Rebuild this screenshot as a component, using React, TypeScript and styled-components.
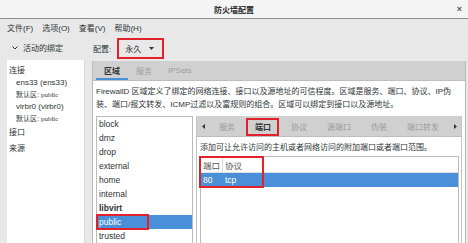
import styled, { createGlobalStyle } from "styled-components"

const FONT = `"Liberation Sans", "Noto Sans CJK SC", sans-serif`

const GlobalStyle = createGlobalStyle`
  html, body {
    margin: 0;
    padding: 0;
    background: #e8e8e8;
    overflow: hidden;
  }
  body {
    font-family: ${FONT};
    font-size: 8px;
    color: #2e3436;
  }
`

const Window = styled.div`
  width: 468px;
  height: 243px;
  display: flex;
  flex-direction: column;
  overflow: hidden;
  background: #e8e8e8;
`

const TitleBar = styled.div`
  height: 18px;
  flex-shrink: 0;
  display: grid;
  grid-template-columns: 1fr auto 1fr;
  align-items: center;
  background: #f4f4f4;
  border-bottom: 1px solid #8e8e8e;
`

const Title = styled.div`
  grid-column: 2;
  font-size: 8px;
  font-weight: bold;
  color: #2e2e2e;
`

const CloseButton = styled.div`
  justify-self: end;
  margin-right: 6px;
  font-size: 9px;
  font-weight: bold;
  color: #555;
  line-height: 1;
`

const MenuBar = styled.div`
  height: 16px;
  flex-shrink: 0;
  display: flex;
  align-items: center;
  padding-left: 7px;
  gap: 9px;
`

const MenuItem = styled.span`
  color: #2e3436;
  white-space: nowrap;
`

const Body = styled.div`
  flex: 1;
  display: flex;
  min-height: 0;
`

const Sidebar = styled.div`
  width: 88px;
  flex-shrink: 0;
  display: flex;
  flex-direction: column;
`

const SidebarHeader = styled.div`
  height: 25px;
  display: flex;
  align-items: center;
  gap: 5px;
  padding-left: 12px;
  white-space: nowrap;
`

const BindingPanel = styled.div`
  flex: 1;
  margin: 0 3px 0 7px;
  padding: 4px 0 0 2px;
  background: #ffffff;
  border-right: 1px solid #dadada;
`

const BindingGroup = styled.div<{ $tall?: boolean }>`
  line-height: ${(p) => (p.$tall ? "16px" : "13px")};
  font-size: 8px;
  white-space: nowrap;
`

const BindingName = styled.div`
  line-height: 12px;
  padding-left: 7px;
  white-space: nowrap;
`

const BindingZone = styled.div`
  line-height: 11px;
  padding-left: 7px;
  font-size: 7px;
  white-space: nowrap;

  span {
    font-family: "Liberation Serif", serif;
    font-size: 7px;
  }
`

const Main = styled.div`
  flex: 1;
  display: flex;
  flex-direction: column;
  margin-left: 4px;
  margin-right: 2px;
  min-width: 0;
`

const ConfigRow = styled.div`
  height: 26px;
  flex-shrink: 0;
  display: flex;
  align-items: center;
  padding-left: 1px;
  gap: 6px;
`

const Dropdown = styled.div`
  height: 21px;
  width: 47px;
  box-sizing: border-box;
  display: flex;
  align-items: center;
  justify-content: space-between;
  padding: 0 8px 0 6px;
  border: 2px solid #e3212b;
`

const Notebook = styled.div`
  flex: 1;
  display: flex;
  flex-direction: column;
  border-left: 1px solid #b9b9b9;
  border-right: 1px solid #b9b9b9;
  min-height: 0;
`

const TabBar = styled.div<{ $height: number }>`
  height: ${(p) => p.$height}px;
  flex-shrink: 0;
  display: flex;
  align-items: stretch;
  background: #d0d0d0;
  border-bottom: 1px solid #bdbdbd;
`

const OuterTab = styled.div<{ $active?: boolean }>`
  display: flex;
  align-items: center;
  padding: 0 8px;
  font-weight: ${(p) => (p.$active ? "bold" : "normal")};
  color: ${(p) => (p.$active ? "#2e3436" : "#9c9c9c")};
  box-shadow: ${(p) => (p.$active ? "inset 0 -2px 0 #4a90d9" : "none")};
  white-space: nowrap;
`

const TabFirst = styled.div`
  width: 3px;
`

const Page = styled.div`
  flex: 1;
  display: flex;
  flex-direction: column;
  background: #ffffff;
  padding: 4px 3px 0 3px;
  min-height: 0;
`

const Description = styled.p`
  margin: 0;
  line-height: 13px;
  white-space: nowrap;
`

const ZoneArea = styled.div`
  flex: 1;
  display: flex;
  gap: 3px;
  margin-top: 5px;
  min-height: 0;
`

const ZoneList = styled.div`
  width: 97px;
  flex-shrink: 0;
  box-sizing: border-box;
  border: 1px solid #bcbcbc;
  border-bottom: none;
`

const ZoneItem = styled.div<{ $selected?: boolean; $bold?: boolean }>`
  position: relative;
  height: 14px;
  line-height: 14px;
  padding-left: 2px;
  font-size: 8.5px;
  font-weight: ${(p) => (p.$bold ? "bold" : "normal")};
  background: ${(p) => (p.$selected ? "#4a90d9" : "transparent")};
  color: ${(p) => (p.$selected ? "#ffffff" : "#2e3436")};
`

const Highlight = styled.div<{ $w: number; $h: number; $l: number; $t: number }>`
  position: absolute;
  left: ${(p) => p.$l}px;
  top: ${(p) => p.$t}px;
  width: ${(p) => p.$w}px;
  height: ${(p) => p.$h}px;
  box-sizing: border-box;
  border: 2px solid #e3212b;
  pointer-events: none;
`

const InnerNotebook = styled.div`
  flex: 1;
  display: flex;
  flex-direction: column;
  border-left: 1px solid #c4c4c4;
  border-right: 1px solid #c4c4c4;
  min-width: 0;
`

const InnerTab = styled.div<{ $active?: boolean }>`
  position: relative;
  display: flex;
  align-items: center;
  padding: 0 10px;
  font-weight: ${(p) => (p.$active ? "bold" : "normal")};
  color: ${(p) => (p.$active ? "#2e3436" : "#9c9c9c")};
  white-space: nowrap;
`

const Arrow = styled.div<{ $right?: boolean }>`
  width: 12px;
  display: flex;
  align-items: center;
  justify-content: center;
  margin-left: ${(p) => (p.$right ? "auto" : "0")};
  color: #2e3436;
`

const InnerPage = styled.div`
  flex: 1;
  display: flex;
  flex-direction: column;
  background: #ffffff;
  padding: 5px 2px 0 3px;
  min-height: 0;
`

const Hint = styled.div`
  line-height: 12px;
  white-space: nowrap;
`

const PortTable = styled.div`
  position: relative;
  flex: 1;
  margin-top: 2px;
  border: 1px solid #bcbcbc;
  border-bottom: none;
`

const TableRow = styled.div<{ $selected?: boolean; $header?: boolean }>`
  display: flex;
  height: ${(p) => (p.$header ? 15 : 14)}px;
  align-items: center;
  background: ${(p) => (p.$selected ? "#4a90d9" : "#ffffff")};
  color: ${(p) => (p.$selected ? "#ffffff" : p.$header ? "#555" : "#2e3436")};
  border-bottom: ${(p) => (p.$header ? "1px solid #e0e0e0" : "none")};
  font-size: 8.5px;
`

const Cell = styled.div<{ $width?: number; $divider?: boolean }>`
  width: ${(p) => (p.$width ? `${p.$width}px` : "auto")};
  padding-left: 2px;
  height: 100%;
  display: flex;
  align-items: center;
  box-sizing: border-box;
  border-right: ${(p) => (p.$divider ? "1px solid #dcdcdc" : "none")};
`

const zones = ["block", "dmz", "drop", "external", "home", "internal", "libvirt", "public", "trusted"]
const innerTabs = ["服务", "端口", "协议", "源端口", "伪装", "端口转发"]

export default function App() {
  return (
    <Window>
      <GlobalStyle />
      <TitleBar>
        <Title>防火墙配置</Title>
        <CloseButton>×</CloseButton>
      </TitleBar>
      <MenuBar>
        <MenuItem>文件(F)</MenuItem>
        <MenuItem>选项(O)</MenuItem>
        <MenuItem>查看(V)</MenuItem>
        <MenuItem>帮助(H)</MenuItem>
      </MenuBar>
      <Body>
        <Sidebar>
          <SidebarHeader>
            <svg width="6" height="4" viewBox="0 0 6 4">
              <path d="M0.5 0.5L3 3L5.5 0.5" fill="none" stroke="#2e3436" strokeWidth="1" />
            </svg>
            活动的绑定
          </SidebarHeader>
          <BindingPanel>
            <BindingGroup>连接</BindingGroup>
            <BindingName>ens33 (ens33)</BindingName>
            <BindingZone>
              默认区: <span>public</span>
            </BindingZone>
            <BindingName>virbr0 (virbr0)</BindingName>
            <BindingZone>
              默认区: <span>public</span>
            </BindingZone>
            <BindingGroup $tall>接口</BindingGroup>
            <BindingGroup $tall>来源</BindingGroup>
          </BindingPanel>
        </Sidebar>
        <Main>
          <ConfigRow>
            <span>配置:</span>
            <Dropdown>
              <span>永久</span>
              <svg width="5" height="3" viewBox="0 0 5 3">
                <path d="M0 0H5L2.5 3Z" fill="#2e3436" />
              </svg>
            </Dropdown>
          </ConfigRow>
          <Notebook>
            <TabBar $height={19}>
              <TabFirst />
              <OuterTab $active>区域</OuterTab>
              <OuterTab>服务</OuterTab>
              <OuterTab>IPSets</OuterTab>
            </TabBar>
            <Page>
              <Description>FirewallD 区域定义了绑定的网络连接、接口以及源地址的可信程度。区域是服务、端口、协议、IP伪</Description>
              <Description>装、端口/报文转发、ICMP过滤以及富规则的组合。区域可以绑定到接口以及源地址。</Description>
              <ZoneArea>
                <ZoneList>
                  {zones.map((z) => (
                    <ZoneItem key={z} $selected={z === "public"} $bold={z === "libvirt"}>
                      {z}
                      {z === "public" && <Highlight $l={-1} $t={-1} $w={53} $h={16} />}
                    </ZoneItem>
                  ))}
                </ZoneList>
                <InnerNotebook>
                  <TabBar $height={20}>
                    <Arrow>
                      <svg width="3" height="5" viewBox="0 0 3 5">
                        <path d="M3 0V5L0 2.5Z" fill="#2e3436" />
                      </svg>
                    </Arrow>
                    {innerTabs.map((t) => (
                      <InnerTab key={t} $active={t === "端口"}>
                        {t}
                        {t === "端口" && <Highlight $l={1} $t={2} $w={33} $h={18} />}
                      </InnerTab>
                    ))}
                    <Arrow $right>
                      <svg width="3" height="5" viewBox="0 0 3 5">
                        <path d="M0 0V5L3 2.5Z" fill="#2e3436" />
                      </svg>
                    </Arrow>
                  </TabBar>
                  <InnerPage>
                    <Hint>添加可让允许访问的主机或者网络访问的附加端口或者端口范围。</Hint>
                    <PortTable>
                      <TableRow $header>
                        <Cell $width={22} $divider>端口</Cell>
                        <Cell>协议</Cell>
                      </TableRow>
                      <TableRow $selected>
                        <Cell $width={22}>80</Cell>
                        <Cell>tcp</Cell>
                      </TableRow>
                      <Highlight $l={-2} $t={-1} $w={65} $h={32} />
                    </PortTable>
                  </InnerPage>
                </InnerNotebook>
              </ZoneArea>
            </Page>
          </Notebook>
        </Main>
      </Body>
    </Window>
  )
}
